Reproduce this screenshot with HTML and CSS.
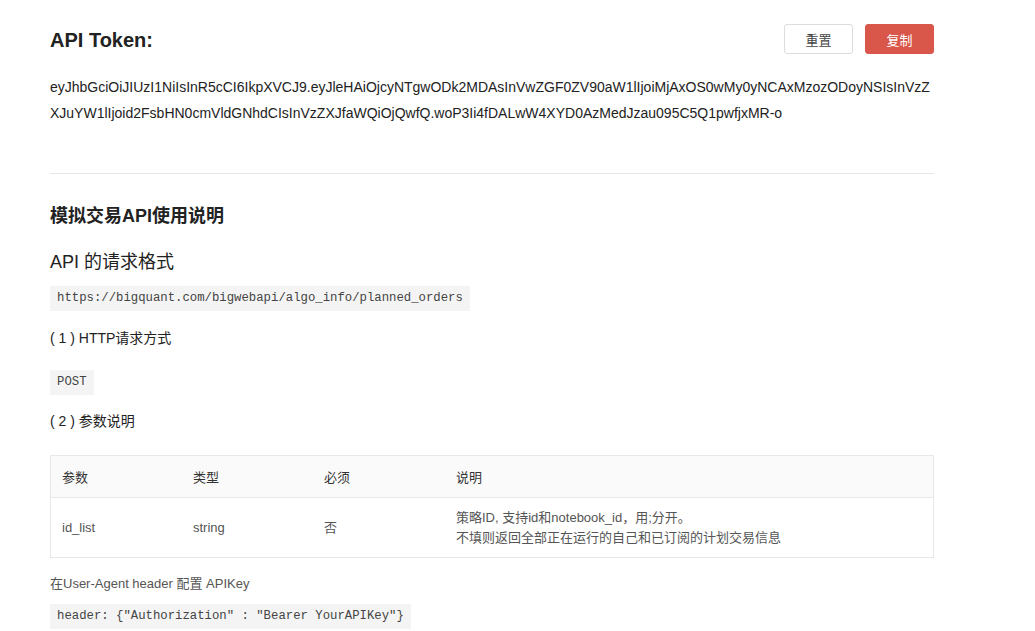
FILE: index.html
```html
<!DOCTYPE html>
<html lang="en">
<head>
    <meta charset="utf-8">
    <title>API Token</title>
    <link rel="stylesheet" href="styles.css">
</head>
<body>
    <div class="container">
        <div class="token-header">
            <h2 class="token-title">API Token:</h2>
            <div class="button-group">
                <button class="btn">重置</button>
                <button class="btn btn-danger">复制</button>
            </div>
        </div>

        <p class="token-text"><span class="token-line">eyJhbGciOiJIUzI1NiIsInR5cCI6IkpXVCJ9.eyJleHAiOjcyNTgwODk2MDAsInVwZGF0ZV90aW1lIjoiMjAxOS0wMy0yNCAxMzozODoyNSIsInVzZ</span><span class="token-line">XJuYW1lIjoid2FsbHN0cmVldGNhdCIsInVzZXJfaWQiOjQwfQ.woP3Ii4fDALwW4XYD0AzMedJzau095C5Q1pwfjxMR-o</span></p>

        <hr class="divider">

        <h3 class="doc-title">模拟交易API使用说明</h3>
        <h4 class="doc-subtitle">API 的请求格式</h4>
        <code class="code-block">https://bigquant.com/bigwebapi/algo_info/planned_orders</code>

        <p class="doc-label">( 1 ) HTTP请求方式</p>
        <code class="code-block">POST</code>

        <p class="doc-label">( 2 ) 参数说明</p>
        <table class="param-table">
            <thead>
                <tr>
                    <th class="col-name">参数</th>
                    <th class="col-type">类型</th>
                    <th class="col-req">必须</th>
                    <th>说明</th>
                </tr>
            </thead>
            <tbody>
                <tr>
                    <td>id_list</td>
                    <td>string</td>
                    <td>否</td>
                    <td>策略ID, 支持id和notebook_id，用;分开。<br>不填则返回全部正在运行的自己和已订阅的计划交易信息</td>
                </tr>
            </tbody>
        </table>

        <p class="doc-note">在User-Agent header 配置 APIKey</p>
        <code class="code-block">header: {"Authorization" : "Bearer YourAPIKey"}</code>
    </div>
</body>
</html>
```

FILE: styles.css
```css
body {
    margin: 0;
    background-color: #ffffff;
    font-family: "Helvetica Neue", "Liberation Sans", "Noto Sans CJK SC", sans-serif;
    color: #222;
}
.container {
    width: 884px;
    margin-left: 50px;
    padding-top: 24px;
    display: flex;
    flex-direction: column;
    align-items: flex-start;
}
.token-header {
    display: flex;
    justify-content: space-between;
    align-items: center;
    width: 100%;
    height: 30px;
}
.token-title {
    margin: 0;
    padding-top: 2px;
    font-size: 20px;
    font-weight: bold;
    color: #222;
}
.button-group {
    display: flex;
    gap: 12px;
}
.btn {
    width: 69px;
    height: 30px;
    border: 1px solid #dcdcdc;
    border-radius: 3px;
    background-color: #ffffff;
    color: #444;
    font-family: "Noto Sans CJK SC", sans-serif;
    font-size: 13px;
    cursor: pointer;
    padding: 0;
}
.btn-danger {
    background-color: #d9574a;
    border-color: #d9574a;
    color: #ffffff;
}
.token-text {
    margin: 20px 0 0;
    font-size: 14px;
    line-height: 26px;
    color: #222;
}
.token-line {
    display: block;
    white-space: nowrap;
}
.divider {
    width: 100%;
    margin: 47px 0 0;
    border: none;
    border-top: 1px solid #e6e6e6;
}
.doc-title {
    margin: 30px 0 0;
    font-size: 18px;
    font-weight: bold;
    line-height: 24px;
    color: #222;
}
.doc-subtitle {
    margin: 22px 0 0;
    font-size: 18px;
    font-weight: normal;
    line-height: 24px;
    color: #222;
}
.code-block {
    display: block;
    margin-top: 12px;
    padding: 0 7px;
    height: 25px;
    line-height: 25px;
    background-color: #f4f4f4;
    font-family: "Liberation Mono", monospace;
    font-size: 12.3px;
    color: #444;
}
.doc-label {
    margin: 17px 0 0;
    font-size: 14px;
    line-height: 20px;
    color: #222;
}
.doc-label + .code-block {
    margin-top: 22px;
}
.code-block + .doc-label + .code-block + .doc-label {
    margin-top: 16px;
}
.param-table {
    width: 100%;
    margin-top: 24px;
    border-collapse: collapse;
    border: 1px solid #e8e8e8;
    font-size: 13px;
}
.param-table th {
    background-color: #fafafa;
    text-align: left;
    font-weight: normal;
    color: #333;
    height: 41px;
    padding: 0 11px;
    border-bottom: 1px solid #e8e8e8;
}
.param-table td {
    height: 59px;
    padding: 0 11px;
    color: #555;
    line-height: 20px;
}
.col-name, .col-type {
    width: 109px;
}
.col-req {
    width: 110px;
}
.doc-note {
    margin: 17px 0 0;
    font-size: 13px;
    line-height: 18px;
    color: #555;
}
.doc-note + .code-block {
    margin-top: 11px;
}
```
